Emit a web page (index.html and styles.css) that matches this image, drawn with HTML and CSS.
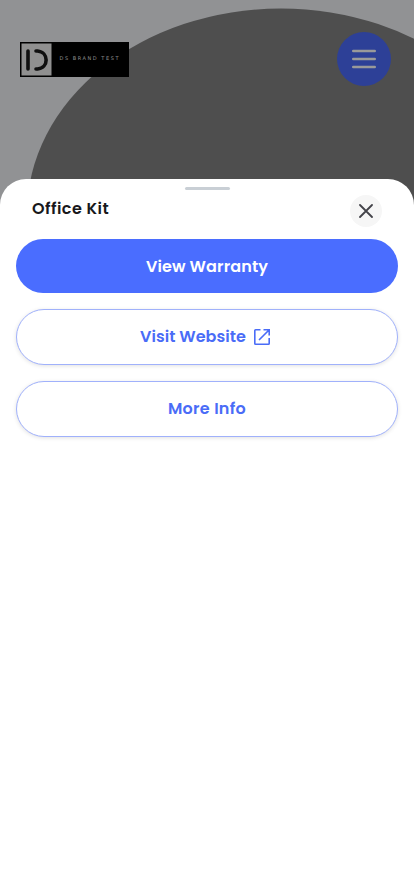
FILE: index.html
```html
<!DOCTYPE html>
<html lang="en">
<head>
<meta charset="utf-8">
<meta name="viewport" content="width=device-width, initial-scale=1">
<title>Office Kit</title>
<link rel="stylesheet" href="styles.css">
</head>
<body>
<header class="hero">
  <svg class="backdrop" width="414" height="230" viewBox="0 0 414 230" aria-hidden="true"><ellipse cx="281" cy="213.500" rx="254" ry="205" fill="#4e4e4e"/></svg>
  <div class="logo">
    <svg width="32" height="35" viewBox="0 0 32 35" aria-hidden="true">
      <path d="M1.500 1.500H31.500V33.500H1.500Z" fill="#909090"/>
      <path d="M8 9V27M16 9H17.500C29 10 29 26 17.500 27H16" fill="none" stroke="#101010" stroke-width="3.600" stroke-linecap="round"/>
    </svg>
    <span class="brand">DS BRAND TEST</span>
  </div>
  <button class="menu" aria-label="Menu">
    <svg width="24" height="20" viewBox="0 0 24 20"><path d="M1.200 2H22.800M1.200 10H22.800M1.200 18H22.800" stroke="#9a9a9a" stroke-width="2.400" stroke-linecap="round"/></svg>
  </button>
</header>
<main class="sheet">
  <div class="handle"></div>
  <div class="title-row">
    <h1 class="title">Office Kit</h1>
    <button class="close" aria-label="Close">
      <svg width="14" height="14" viewBox="0 0 14 14"><path d="M1 1L13 13M13 1L1 13" stroke="#434349" stroke-width="1.800" stroke-linecap="round"/></svg>
    </button>
  </div>
  <div class="actions">
    <button class="btn primary"><span class="label view">View Warranty</span></button>
    <button class="btn outline"><span class="label">Visit Website</span>
      <svg class="external" width="16" height="16" viewBox="0 0 16 16"><path d="M6.500 .8H1.600Q.8 .8 .8 1.600V14.400Q.8 15.200 1.600 15.200H14.400Q15.200 15.200 15.200 14.400V9M9.500 .8H15.200V6.500M15 1L5 11" fill="none" stroke="#4a6cf7" stroke-width="1.600"/></svg>
    </button>
    <button class="btn outline"><span class="label more">More Info</span></button>
  </div>
</main>
</body>
</html>
```
FILE: styles.css
```css
* { box-sizing: border-box; }
body {
  margin: 0;
  height: 896px;
  overflow: hidden;
  background: #919294;
  font-family: Poppins, Inter, "Liberation Sans", sans-serif;
}
button { border: 0; padding: 0; font: inherit; }
svg { display: block; flex: none; }
.hero {
  position: relative;
  height: 179px;
  padding: 32px 23px 0 20px;
  display: flex;
  justify-content: space-between;
  align-items: flex-start;
}
.backdrop { position: absolute; left: 0; top: 0; }
.logo {
  position: relative;
  margin-top: 10px;
  width: 109px;
  height: 34.500px;
  background: #000;
  display: flex;
  overflow: hidden;
}
.brand {
  margin: 12px 0 0 7.500px;
  font-family: "DejaVu Sans", sans-serif;
  font-size: 5px;
  line-height: 9px;
  font-weight: 400;
  letter-spacing: 1.550px;
  color: #909090;
  white-space: nowrap;
}
.menu {
  position: relative;
  width: 54px;
  height: 54px;
  border-radius: 50%;
  background: #2d4097;
  display: flex;
  align-items: center;
  justify-content: center;
}
.sheet {
  position: relative;
  height: 717px;
  padding: 8px 16px 0;
  border-radius: 26px 26px 0 0;
  background: #fff;
}
.handle {
  width: 45px;
  height: 3px;
  margin: 0 auto;
  border-radius: 2px;
  background: #c9cfd5;
}
.title-row {
  display: flex;
  justify-content: space-between;
  align-items: flex-start;
  height: 44px;
  margin-top: 5px;
  padding: 0 16px;
}
.title {
  margin: 2px 0 0;
  font-size: 16px;
  line-height: 24px;
  font-weight: 600;
  letter-spacing: .45px;
  color: #18181b;
}
.close {
  width: 32px;
  height: 32px;
  border-radius: 50%;
  background: #f6f6f6;
  display: flex;
  align-items: center;
  justify-content: center;
}
.actions { display: grid; gap: 16px; }
.btn {
  height: 56px;
  border-radius: 28px;
  display: flex;
  align-items: center;
  justify-content: center;
  font-size: 16px;
  font-weight: 600;
  line-height: 24px;
}
.primary { height: 54px; padding-top: 2px; background: #4a6dff; color: #fff; }
.outline {
  border: 1px solid #a0b1fb;
  background: #fff;
  color: #4a6cf7;
  box-shadow: 0 1px 4px rgba(0, 0, 0, .12);
}
.label { white-space: nowrap; letter-spacing: .03px; }
.view { letter-spacing: .13px; }
.more { letter-spacing: .3px; }
.external { margin: 0 4px 1px 8px; }
```
